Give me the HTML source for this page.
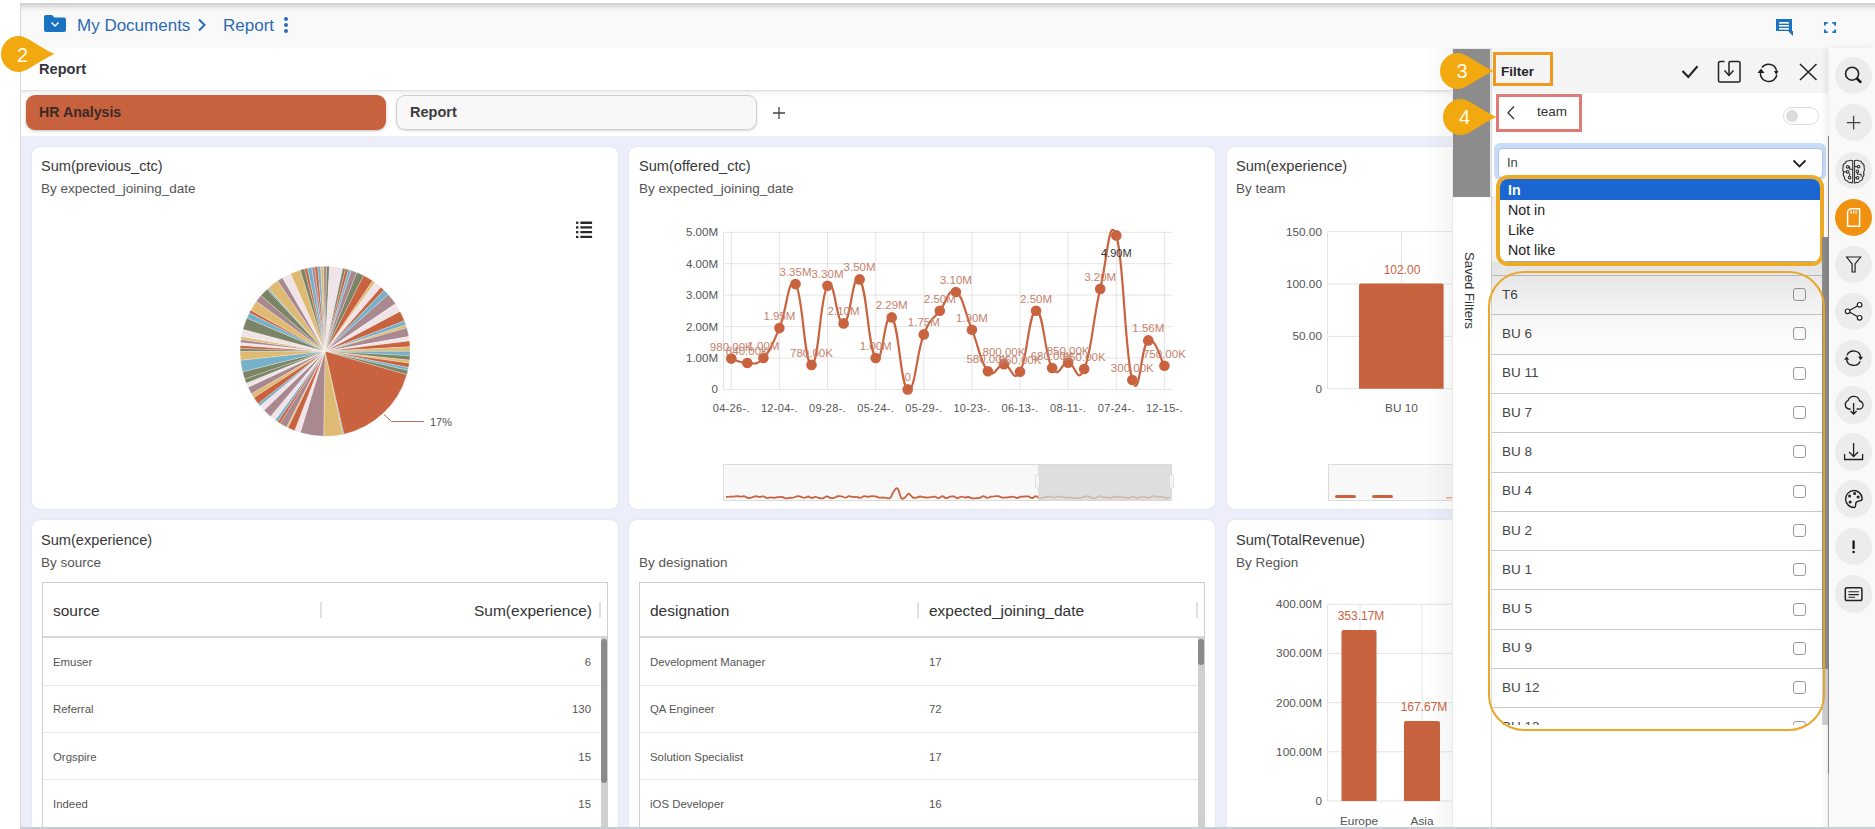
<!DOCTYPE html>
<html><head><meta charset="utf-8">
<style>
*{box-sizing:border-box;margin:0;padding:0}
html,body{width:1875px;height:829px;overflow:hidden;background:#fff;font-family:"Liberation Sans",sans-serif;color:#333}
.a{position:absolute}
#frame{left:20px;top:3px;width:1855px;height:826px;background:#eceef9;border-left:1px solid #d6d6d6;overflow:hidden}
#topshadow{display:none}
#hdr{left:21px;top:3px;width:1854px;height:45px;background:linear-gradient(#cfcfcf 0px,#d6d6d6 1.5px,#e2e2e2 3.5px,#f1f1f1 6px,#f9f9f9 8.5px)}
#rrow{left:21px;top:48px;width:1854px;height:43px;background:#fff}
#trow{left:21px;top:91px;width:1854px;height:45px;background:#fff}
.t{white-space:nowrap;line-height:1}
.card{background:#fff;border-radius:8px;box-shadow:0 0 1.5px rgba(120,130,170,.25)}
.ctitle{font-size:14.6px;color:#383838}
.csub{font-size:13.5px;color:#555}
.lbl{font-size:11.4px;color:#555}
.dl{font-size:11px;fill:#c47a62}
</style></head><body>
<div class="a" id="topshadow"></div>
<div class="a" id="frame"></div>
<div class="a" id="hdr"></div>
<div class="a" id="rrow"></div>
<div class="a" id="trow" style="top:91px;height:45px"></div>
<div class="a" style="left:21px;top:90px;width:1854px;height:8px;background:linear-gradient(rgba(0,0,0,.13),rgba(0,0,0,.05) 25%,rgba(0,0,0,.015) 60%,rgba(0,0,0,0))"></div>

<!-- breadcrumb -->
<svg class="a" style="left:44px;top:15px" width="22" height="17" viewBox="0 0 22 17">
<path d="M2 0 H8 L10.5 2.5 H20 Q22 2.5 22 4.5 V15 Q22 17 20 17 H2 Q0 17 0 15 V2 Q0 0 2 0Z" fill="#1a73c0"/>
<path d="M7.5 7.5 L11 11 L14.5 7.5" stroke="#fff" stroke-width="1.5" fill="none"/>
</svg>
<div class="a t" style="left:77px;top:17px;font-size:17px;color:#2d6bb0">My Documents</div>
<svg class="a" style="left:197px;top:18px" width="10" height="14"><path d="M2 1.5 L7.5 7 L2 12.5" stroke="#2a6cb4" stroke-width="2" fill="none"/></svg>
<div class="a t" style="left:223px;top:17px;font-size:17px;color:#2d6bb0">Report</div>
<svg class="a" style="left:283px;top:16px" width="6" height="18"><circle cx="3" cy="3" r="2" fill="#2a6cb4"/><circle cx="3" cy="9" r="2" fill="#2a6cb4"/><circle cx="3" cy="15" r="2" fill="#2a6cb4"/></svg>

<!-- header right icons -->
<svg class="a" style="left:1776px;top:19px" width="18" height="17" viewBox="0 0 18 17">
<path d="M0 0 H16 V12 H17 V17 L12 12 H0Z" fill="#1a73c0"/>
<rect x="3" y="3" width="10" height="1.6" fill="#fff"/><rect x="3" y="6" width="10" height="1.6" fill="#fff"/><rect x="3" y="9" width="10" height="1.6" fill="#fff"/>
</svg>
<svg class="a" style="left:1824px;top:22px" width="12" height="11" viewBox="0 0 13 13" preserveAspectRatio="none">
<path d="M1 4 V1 H4 M9 1 H12 V4 M12 9 V12 H9 M4 12 H1 V9" stroke="#1a73c0" stroke-width="2" fill="none"/>
</svg>

<!-- report row -->
<div class="a t" style="left:39px;top:62px;font-size:14.6px;font-weight:bold;color:#34343e">Report</div>

<!-- tabs -->
<div class="a" style="left:26px;top:95px;width:360px;height:35px;background:#c8623e;border-radius:9px;box-shadow:0 1px 3px rgba(0,0,0,.25)"></div>
<div class="a t" style="left:39px;top:105px;font-size:14.2px;font-weight:bold;color:#3a2a28">HR Analysis</div>
<div class="a" style="left:396px;top:95px;width:361px;height:35px;background:#f8f8f8;border:1px solid #cfcfcf;border-radius:9px;box-shadow:0 1px 2px rgba(0,0,0,.15)"></div>
<div class="a t" style="left:410px;top:105px;font-size:14.5px;font-weight:bold;color:#3b3b3b">Report</div>
<svg class="a" style="left:773px;top:107px" width="12" height="12"><path d="M6 0 V12 M0 6 H12" stroke="#444" stroke-width="1.3"/></svg>

<!-- CARDS -->
<div class="a card" style="left:32px;top:147px;width:586px;height:362px"></div>
<div class="a card" style="left:629px;top:147px;width:586px;height:362px"></div>
<div class="a card" style="left:1227px;top:147px;width:586px;height:362px"></div>
<div class="a card" style="left:32px;top:520px;width:586px;height:330px"></div>
<div class="a card" style="left:629px;top:520px;width:586px;height:330px"></div>
<div class="a card" style="left:1227px;top:520px;width:586px;height:330px"></div>

<!-- card titles -->
<div class="a t ctitle" style="left:41px;top:159px">Sum(previous_ctc)</div>
<div class="a t csub" style="left:41px;top:182px">By expected_joining_date</div>
<div class="a t ctitle" style="left:639px;top:159px">Sum(offered_ctc)</div>
<div class="a t csub" style="left:639px;top:182px">By expected_joining_date</div>
<div class="a t ctitle" style="left:1236px;top:159px">Sum(experience)</div>
<div class="a t csub" style="left:1236px;top:182px">By team</div>
<div class="a t ctitle" style="left:41px;top:533px">Sum(experience)</div>
<div class="a t csub" style="left:41px;top:556px">By source</div>
<div class="a t csub" style="left:639px;top:556px">By designation</div>
<div class="a t ctitle" style="left:1236px;top:533px">Sum(TotalRevenue)</div>
<div class="a t csub" style="left:1236px;top:556px">By Region</div>

<!-- legend icon -->
<svg class="a" style="left:575px;top:220px" width="19" height="20" viewBox="0 0 19 20">
<g fill="#2a2a2e"><rect x="1" y="1.6" width="2.4" height="2.3"/><rect x="1" y="6.3" width="2.4" height="2.3"/><rect x="1" y="11" width="2.4" height="2.3"/><rect x="1" y="15.8" width="2.4" height="2.3"/>
<rect x="5.3" y="1.6" width="11.8" height="2.3" rx="0.6"/><rect x="5.3" y="6.3" width="11.8" height="2.3" rx="0.6"/><rect x="5.3" y="11" width="11.8" height="2.3" rx="0.6"/><rect x="5.3" y="15.8" width="11.8" height="2.3" rx="0.6"/></g>
</svg>
<svg class="a" style="left:0;top:0" width="620" height="520">
<path d="M325.1 351.3 L343.93 434.19 A85 85 0 0 1 342.77 434.44Z" fill="#77b0c9" stroke="#fff" stroke-width="0.25"/>
<path d="M325.1 351.3 L342.77 434.44 A85 85 0 0 1 323.62 436.29Z" fill="#dfba73" stroke="#fff" stroke-width="0.25"/>
<path d="M325.1 351.3 L323.62 436.29 A85 85 0 0 1 300.25 432.59Z" fill="#a98890" stroke="#fff" stroke-width="0.25"/>
<path d="M325.1 351.3 L300.25 432.59 A85 85 0 0 1 294.64 430.65Z" fill="#f0e4e8" stroke="#fff" stroke-width="0.25"/>
<path d="M325.1 351.3 L294.64 430.65 A85 85 0 0 1 287.84 427.70Z" fill="#c9633f" stroke="#fff" stroke-width="0.25"/>
<path d="M325.1 351.3 L287.84 427.70 A85 85 0 0 1 286.51 427.04Z" fill="#dfba73" stroke="#fff" stroke-width="0.25"/>
<path d="M325.1 351.3 L286.51 427.04 A85 85 0 0 1 280.06 423.38Z" fill="#a98890" stroke="#fff" stroke-width="0.25"/>
<path d="M325.1 351.3 L280.06 423.38 A85 85 0 0 1 277.57 421.77Z" fill="#c9633f" stroke="#fff" stroke-width="0.25"/>
<path d="M325.1 351.3 L277.57 421.77 A85 85 0 0 1 275.14 420.07Z" fill="#77b0c9" stroke="#fff" stroke-width="0.25"/>
<path d="M325.1 351.3 L275.14 420.07 A85 85 0 0 1 270.46 416.41Z" fill="#f0e4e8" stroke="#fff" stroke-width="0.25"/>
<path d="M325.1 351.3 L270.46 416.41 A85 85 0 0 1 263.96 410.35Z" fill="#a98890" stroke="#fff" stroke-width="0.25"/>
<path d="M325.1 351.3 L263.96 410.35 A85 85 0 0 1 259.99 405.94Z" fill="#f0e4e8" stroke="#fff" stroke-width="0.25"/>
<path d="M325.1 351.3 L259.99 405.94 A85 85 0 0 1 258.12 403.63Z" fill="#77b0c9" stroke="#fff" stroke-width="0.25"/>
<path d="M325.1 351.3 L258.12 403.63 A85 85 0 0 1 253.81 397.59Z" fill="#c9633f" stroke="#fff" stroke-width="0.25"/>
<path d="M325.1 351.3 L253.81 397.59 A85 85 0 0 1 251.49 393.80Z" fill="#dfba73" stroke="#fff" stroke-width="0.25"/>
<path d="M325.1 351.3 L251.49 393.80 A85 85 0 0 1 248.06 387.22Z" fill="#a98890" stroke="#fff" stroke-width="0.25"/>
<path d="M325.1 351.3 L248.06 387.22 A85 85 0 0 1 246.29 383.14Z" fill="#f0e4e8" stroke="#fff" stroke-width="0.25"/>
<path d="M325.1 351.3 L246.29 383.14 A85 85 0 0 1 244.73 378.97Z" fill="#7b8565" stroke="#fff" stroke-width="0.25"/>
<path d="M325.1 351.3 L244.73 378.97 A85 85 0 0 1 242.62 371.86Z" fill="#7b8565" stroke="#fff" stroke-width="0.25"/>
<path d="M325.1 351.3 L242.62 371.86 A85 85 0 0 1 240.57 360.18Z" fill="#77b0c9" stroke="#fff" stroke-width="0.25"/>
<path d="M325.1 351.3 L240.57 360.18 A85 85 0 0 1 240.10 351.30Z" fill="#dfba73" stroke="#fff" stroke-width="0.25"/>
<path d="M325.1 351.3 L240.10 351.30 A85 85 0 0 1 240.15 348.33Z" fill="#7b8565" stroke="#fff" stroke-width="0.25"/>
<path d="M325.1 351.3 L240.15 348.33 A85 85 0 0 1 240.31 345.37Z" fill="#c9633f" stroke="#fff" stroke-width="0.25"/>
<path d="M325.1 351.3 L240.31 345.37 A85 85 0 0 1 240.57 342.42Z" fill="#f0e4e8" stroke="#fff" stroke-width="0.25"/>
<path d="M325.1 351.3 L240.57 342.42 A85 85 0 0 1 240.93 339.47Z" fill="#a98890" stroke="#fff" stroke-width="0.25"/>
<path d="M325.1 351.3 L240.93 339.47 A85 85 0 0 1 241.39 336.54Z" fill="#dfba73" stroke="#fff" stroke-width="0.25"/>
<path d="M325.1 351.3 L241.39 336.54 A85 85 0 0 1 243.00 329.30Z" fill="#f0e4e8" stroke="#fff" stroke-width="0.25"/>
<path d="M325.1 351.3 L243.00 329.30 A85 85 0 0 1 246.86 318.09Z" fill="#7b8565" stroke="#fff" stroke-width="0.25"/>
<path d="M325.1 351.3 L246.86 318.09 A85 85 0 0 1 249.36 312.71Z" fill="#77b0c9" stroke="#fff" stroke-width="0.25"/>
<path d="M325.1 351.3 L249.36 312.71 A85 85 0 0 1 250.76 310.09Z" fill="#c9633f" stroke="#fff" stroke-width="0.25"/>
<path d="M325.1 351.3 L250.76 310.09 A85 85 0 0 1 256.33 301.34Z" fill="#dfba73" stroke="#fff" stroke-width="0.25"/>
<path d="M325.1 351.3 L256.33 301.34 A85 85 0 0 1 260.95 295.53Z" fill="#a98890" stroke="#fff" stroke-width="0.25"/>
<path d="M325.1 351.3 L260.95 295.53 A85 85 0 0 1 267.13 289.13Z" fill="#7b8565" stroke="#fff" stroke-width="0.25"/>
<path d="M325.1 351.3 L267.13 289.13 A85 85 0 0 1 268.22 288.13Z" fill="#77b0c9" stroke="#fff" stroke-width="0.25"/>
<path d="M325.1 351.3 L268.22 288.13 A85 85 0 0 1 277.57 280.83Z" fill="#dfba73" stroke="#fff" stroke-width="0.25"/>
<path d="M325.1 351.3 L277.57 280.83 A85 85 0 0 1 282.60 277.69Z" fill="#a98890" stroke="#fff" stroke-width="0.25"/>
<path d="M325.1 351.3 L282.60 277.69 A85 85 0 0 1 290.53 273.65Z" fill="#f0e4e8" stroke="#fff" stroke-width="0.25"/>
<path d="M325.1 351.3 L290.53 273.65 A85 85 0 0 1 300.25 270.01Z" fill="#dfba73" stroke="#fff" stroke-width="0.25"/>
<path d="M325.1 351.3 L300.25 270.01 A85 85 0 0 1 304.54 268.82Z" fill="#7b8565" stroke="#fff" stroke-width="0.25"/>
<path d="M325.1 351.3 L304.54 268.82 A85 85 0 0 1 307.43 268.16Z" fill="#c9633f" stroke="#fff" stroke-width="0.25"/>
<path d="M325.1 351.3 L307.43 268.16 A85 85 0 0 1 311.80 267.35Z" fill="#77b0c9" stroke="#fff" stroke-width="0.25"/>
<path d="M325.1 351.3 L311.80 267.35 A85 85 0 0 1 314.74 266.93Z" fill="#a98890" stroke="#fff" stroke-width="0.25"/>
<path d="M325.1 351.3 L314.74 266.93 A85 85 0 0 1 317.69 266.62Z" fill="#c9633f" stroke="#fff" stroke-width="0.25"/>
<path d="M325.1 351.3 L317.69 266.62 A85 85 0 0 1 320.65 266.42Z" fill="#77b0c9" stroke="#fff" stroke-width="0.25"/>
<path d="M325.1 351.3 L320.65 266.42 A85 85 0 0 1 323.62 266.31Z" fill="#dfba73" stroke="#fff" stroke-width="0.25"/>
<path d="M325.1 351.3 L323.62 266.31 A85 85 0 0 1 326.58 266.31Z" fill="#a98890" stroke="#fff" stroke-width="0.25"/>
<path d="M325.1 351.3 L326.58 266.31 A85 85 0 0 1 329.55 266.42Z" fill="#7b8565" stroke="#fff" stroke-width="0.25"/>
<path d="M325.1 351.3 L329.55 266.42 A85 85 0 0 1 342.77 268.16Z" fill="#f0e4e8" stroke="#fff" stroke-width="0.25"/>
<path d="M325.1 351.3 L342.77 268.16 A85 85 0 0 1 345.66 268.82Z" fill="#7b8565" stroke="#fff" stroke-width="0.25"/>
<path d="M325.1 351.3 L345.66 268.82 A85 85 0 0 1 348.53 269.59Z" fill="#c9633f" stroke="#fff" stroke-width="0.25"/>
<path d="M325.1 351.3 L348.53 269.59 A85 85 0 0 1 351.37 270.46Z" fill="#77b0c9" stroke="#fff" stroke-width="0.25"/>
<path d="M325.1 351.3 L351.37 270.46 A85 85 0 0 1 356.94 272.49Z" fill="#a98890" stroke="#fff" stroke-width="0.25"/>
<path d="M325.1 351.3 L356.94 272.49 A85 85 0 0 1 363.69 275.56Z" fill="#7b8565" stroke="#fff" stroke-width="0.25"/>
<path d="M325.1 351.3 L363.69 275.56 A85 85 0 0 1 372.63 280.83Z" fill="#c9633f" stroke="#fff" stroke-width="0.25"/>
<path d="M325.1 351.3 L372.63 280.83 A85 85 0 0 1 375.06 282.53Z" fill="#dfba73" stroke="#fff" stroke-width="0.25"/>
<path d="M325.1 351.3 L375.06 282.53 A85 85 0 0 1 380.87 287.15Z" fill="#f0e4e8" stroke="#fff" stroke-width="0.25"/>
<path d="M325.1 351.3 L380.87 287.15 A85 85 0 0 1 384.15 290.16Z" fill="#c9633f" stroke="#fff" stroke-width="0.25"/>
<path d="M325.1 351.3 L384.15 290.16 A85 85 0 0 1 388.27 294.42Z" fill="#77b0c9" stroke="#fff" stroke-width="0.25"/>
<path d="M325.1 351.3 L388.27 294.42 A85 85 0 0 1 395.57 303.77Z" fill="#a98890" stroke="#fff" stroke-width="0.25"/>
<path d="M325.1 351.3 L395.57 303.77 A85 85 0 0 1 400.15 311.39Z" fill="#f0e4e8" stroke="#fff" stroke-width="0.25"/>
<path d="M325.1 351.3 L400.15 311.39 A85 85 0 0 1 404.45 320.84Z" fill="#c9633f" stroke="#fff" stroke-width="0.25"/>
<path d="M325.1 351.3 L404.45 320.84 A85 85 0 0 1 405.94 325.03Z" fill="#77b0c9" stroke="#fff" stroke-width="0.25"/>
<path d="M325.1 351.3 L405.94 325.03 A85 85 0 0 1 406.81 327.87Z" fill="#dfba73" stroke="#fff" stroke-width="0.25"/>
<path d="M325.1 351.3 L406.81 327.87 A85 85 0 0 1 408.81 336.54Z" fill="#a98890" stroke="#fff" stroke-width="0.25"/>
<path d="M325.1 351.3 L408.81 336.54 A85 85 0 0 1 409.47 340.94Z" fill="#f0e4e8" stroke="#fff" stroke-width="0.25"/>
<path d="M325.1 351.3 L409.47 340.94 A85 85 0 0 1 409.98 346.85Z" fill="#c9633f" stroke="#fff" stroke-width="0.25"/>
<path d="M325.1 351.3 L409.98 346.85 A85 85 0 0 1 410.10 351.30Z" fill="#dfba73" stroke="#fff" stroke-width="0.25"/>
<path d="M325.1 351.3 L410.10 351.30 A85 85 0 0 1 409.98 355.75Z" fill="#77b0c9" stroke="#fff" stroke-width="0.25"/>
<path d="M325.1 351.3 L409.98 355.75 A85 85 0 0 1 409.63 360.18Z" fill="#7b8565" stroke="#fff" stroke-width="0.25"/>
<path d="M325.1 351.3 L409.63 360.18 A85 85 0 0 1 409.27 363.13Z" fill="#dfba73" stroke="#fff" stroke-width="0.25"/>
<path d="M325.1 351.3 L409.27 363.13 A85 85 0 0 1 408.54 367.52Z" fill="#c9633f" stroke="#fff" stroke-width="0.25"/>
<path d="M325.1 351.3 L408.54 367.52 A85 85 0 0 1 407.92 370.42Z" fill="#77b0c9" stroke="#fff" stroke-width="0.25"/>
<path d="M325.1 351.3 L407.92 370.42 A85 85 0 0 1 406.81 374.73Z" fill="#7b8565" stroke="#fff" stroke-width="0.25"/>
<path d="M325.1 351.3 L406.81 374.73 A85 85 0 0 1 343.93 434.19Z" fill="#c9633f" stroke="#fff" stroke-width="0.25"/>
<path d="M384 414.5 L391.5 421.5 H424" stroke="#b0705c" stroke-width="1" fill="none"/>
<text x="430" y="426" font-size="11" fill="#555" font-family="Liberation Sans">17%</text>
</svg>
<svg class="a" style="left:0;top:0" width="1230" height="520" font-family="Liberation Sans">
<line x1="723" y1="389.4" x2="1172" y2="389.4" stroke="#e4e4e4" stroke-width="1"/>
<text x="718" y="393.4" font-size="11.5" fill="#555" text-anchor="end">0</text>
<line x1="723" y1="358.0" x2="1172" y2="358.0" stroke="#e4e4e4" stroke-width="1"/>
<text x="718" y="362.0" font-size="11.5" fill="#555" text-anchor="end">1.00M</text>
<line x1="723" y1="326.6" x2="1172" y2="326.6" stroke="#e4e4e4" stroke-width="1"/>
<text x="718" y="330.6" font-size="11.5" fill="#555" text-anchor="end">2.00M</text>
<line x1="723" y1="295.1" x2="1172" y2="295.1" stroke="#e4e4e4" stroke-width="1"/>
<text x="718" y="299.1" font-size="11.5" fill="#555" text-anchor="end">3.00M</text>
<line x1="723" y1="263.7" x2="1172" y2="263.7" stroke="#e4e4e4" stroke-width="1"/>
<text x="718" y="267.7" font-size="11.5" fill="#555" text-anchor="end">4.00M</text>
<line x1="723" y1="232.3" x2="1172" y2="232.3" stroke="#e4e4e4" stroke-width="1"/>
<text x="718" y="236.3" font-size="11.5" fill="#555" text-anchor="end">5.00M</text>
<line x1="731.3" y1="232" x2="731.3" y2="389.4" stroke="#e4e4e4" stroke-width="1"/>
<line x1="779.4" y1="232" x2="779.4" y2="389.4" stroke="#e4e4e4" stroke-width="1"/>
<line x1="827.5" y1="232" x2="827.5" y2="389.4" stroke="#e4e4e4" stroke-width="1"/>
<line x1="875.7" y1="232" x2="875.7" y2="389.4" stroke="#e4e4e4" stroke-width="1"/>
<line x1="923.8" y1="232" x2="923.8" y2="389.4" stroke="#e4e4e4" stroke-width="1"/>
<line x1="971.9" y1="232" x2="971.9" y2="389.4" stroke="#e4e4e4" stroke-width="1"/>
<line x1="1020.0" y1="232" x2="1020.0" y2="389.4" stroke="#e4e4e4" stroke-width="1"/>
<line x1="1068.1" y1="232" x2="1068.1" y2="389.4" stroke="#e4e4e4" stroke-width="1"/>
<line x1="1116.3" y1="232" x2="1116.3" y2="389.4" stroke="#e4e4e4" stroke-width="1"/>
<line x1="1164.4" y1="232" x2="1164.4" y2="389.4" stroke="#e4e4e4" stroke-width="1"/>
<text x="731.3" y="412" font-size="11" fill="#555" text-anchor="middle" letter-spacing="0.3">04-26-.</text>
<text x="779.4" y="412" font-size="11" fill="#555" text-anchor="middle" letter-spacing="0.3">12-04-.</text>
<text x="827.5" y="412" font-size="11" fill="#555" text-anchor="middle" letter-spacing="0.3">09-28-.</text>
<text x="875.7" y="412" font-size="11" fill="#555" text-anchor="middle" letter-spacing="0.3">05-24-.</text>
<text x="923.8" y="412" font-size="11" fill="#555" text-anchor="middle" letter-spacing="0.3">05-29-.</text>
<text x="971.9" y="412" font-size="11" fill="#555" text-anchor="middle" letter-spacing="0.3">10-23-.</text>
<text x="1020.0" y="412" font-size="11" fill="#555" text-anchor="middle" letter-spacing="0.3">06-13-.</text>
<text x="1068.1" y="412" font-size="11" fill="#555" text-anchor="middle" letter-spacing="0.3">08-11-.</text>
<text x="1116.3" y="412" font-size="11" fill="#555" text-anchor="middle" letter-spacing="0.3">07-24-.</text>
<text x="1164.4" y="412" font-size="11" fill="#555" text-anchor="middle" letter-spacing="0.3">12-15-.</text>
<line x1="723.5" y1="232" x2="723.5" y2="389.4" stroke="#e4e4e4"/>
<path d="M731.3 358.6 C735.0 359.6 739.9 363.2 747.3 363.0 C754.8 362.9 755.9 366.1 763.4 358.0 C770.9 349.8 771.9 345.4 779.4 328.1 C786.9 310.9 788.0 275.6 795.5 284.1 C802.9 292.7 804.0 364.5 811.5 364.9 C819.0 365.3 820.1 295.4 827.5 285.7 C835.0 276.0 836.1 324.9 843.6 323.4 C851.1 322.0 852.1 271.4 859.6 279.4 C867.1 287.5 868.2 349.1 875.7 358.0 C883.1 366.9 884.2 310.1 891.7 317.4 C899.2 324.8 900.3 385.4 907.7 389.4 C915.2 393.4 916.3 352.7 923.8 334.4 C931.3 316.1 932.3 320.7 939.8 310.8 C947.3 301.0 948.4 287.6 955.9 292.0 C963.3 296.4 964.4 311.2 971.9 329.7 C979.4 348.2 980.5 363.1 987.9 371.2 C995.4 379.2 996.5 364.1 1004.0 364.3 C1011.5 364.4 1012.5 384.3 1020.0 371.8 C1027.5 359.3 1028.6 311.7 1036.1 310.8 C1043.5 310.0 1044.6 355.9 1052.1 368.0 C1059.6 380.1 1060.7 362.5 1068.1 362.7 C1075.6 362.9 1076.7 386.2 1084.2 369.0 C1091.7 351.7 1092.7 320.0 1100.2 288.9 C1107.7 257.7 1108.8 214.2 1116.3 235.4 C1123.7 256.7 1124.8 355.5 1132.3 380.0 C1139.8 404.5 1140.9 343.7 1148.3 340.4 C1155.8 337.1 1160.6 359.9 1164.4 365.8" stroke="#c9633f" stroke-width="2.2" fill="none"/>
<circle cx="731.3" cy="358.6" r="5.3" fill="#c9633f"/>
<circle cx="747.3" cy="363.0" r="5.3" fill="#c9633f"/>
<circle cx="763.4" cy="358.0" r="5.3" fill="#c9633f"/>
<circle cx="779.4" cy="328.1" r="5.3" fill="#c9633f"/>
<circle cx="795.5" cy="284.1" r="5.3" fill="#c9633f"/>
<circle cx="811.5" cy="364.9" r="5.3" fill="#c9633f"/>
<circle cx="827.5" cy="285.7" r="5.3" fill="#c9633f"/>
<circle cx="843.6" cy="323.4" r="5.3" fill="#c9633f"/>
<circle cx="859.6" cy="279.4" r="5.3" fill="#c9633f"/>
<circle cx="875.7" cy="358.0" r="5.3" fill="#c9633f"/>
<circle cx="891.7" cy="317.4" r="5.3" fill="#c9633f"/>
<circle cx="907.7" cy="389.4" r="5.3" fill="#c9633f"/>
<circle cx="923.8" cy="334.4" r="5.3" fill="#c9633f"/>
<circle cx="939.8" cy="310.8" r="5.3" fill="#c9633f"/>
<circle cx="955.9" cy="292.0" r="5.3" fill="#c9633f"/>
<circle cx="971.9" cy="329.7" r="5.3" fill="#c9633f"/>
<circle cx="987.9" cy="371.2" r="5.3" fill="#c9633f"/>
<circle cx="1004.0" cy="364.3" r="5.3" fill="#c9633f"/>
<circle cx="1020.0" cy="371.8" r="5.3" fill="#c9633f"/>
<circle cx="1036.1" cy="310.8" r="5.3" fill="#c9633f"/>
<circle cx="1052.1" cy="368.0" r="5.3" fill="#c9633f"/>
<circle cx="1068.1" cy="362.7" r="5.3" fill="#c9633f"/>
<circle cx="1084.2" cy="369.0" r="5.3" fill="#c9633f"/>
<circle cx="1100.2" cy="288.9" r="5.3" fill="#c9633f"/>
<circle cx="1116.3" cy="235.4" r="5.3" fill="#c9633f"/>
<circle cx="1132.3" cy="380.0" r="5.3" fill="#c9633f"/>
<circle cx="1148.3" cy="340.4" r="5.3" fill="#c9633f"/>
<circle cx="1164.4" cy="365.8" r="5.3" fill="#c9633f"/>
<text x="731.3" y="350.6" font-size="11.5" fill="#c4826e" text-anchor="middle">980.00K</text>
<text x="747.3" y="355.0" font-size="11.5" fill="#c4826e" text-anchor="middle">840.00K</text>
<text x="763.4" y="350.0" font-size="11.5" fill="#c4826e" text-anchor="middle">1.00M</text>
<text x="779.4" y="320.1" font-size="11.5" fill="#c4826e" text-anchor="middle">1.95M</text>
<text x="795.5" y="276.1" font-size="11.5" fill="#c4826e" text-anchor="middle">3.35M</text>
<text x="811.5" y="356.9" font-size="11.5" fill="#c4826e" text-anchor="middle">780.00K</text>
<text x="827.5" y="277.7" font-size="11.5" fill="#c4826e" text-anchor="middle">3.30M</text>
<text x="843.6" y="315.4" font-size="11.5" fill="#c4826e" text-anchor="middle">2.10M</text>
<text x="859.6" y="271.4" font-size="11.5" fill="#c4826e" text-anchor="middle">3.50M</text>
<text x="875.7" y="350.0" font-size="11.5" fill="#c4826e" text-anchor="middle">1.00M</text>
<text x="891.7" y="309.4" font-size="11.5" fill="#c4826e" text-anchor="middle">2.29M</text>
<text x="907.7" y="381.4" font-size="11.5" fill="#c4826e" text-anchor="middle">0</text>
<text x="923.8" y="326.4" font-size="11.5" fill="#c4826e" text-anchor="middle">1.75M</text>
<text x="939.8" y="302.8" font-size="11.5" fill="#c4826e" text-anchor="middle">2.50M</text>
<text x="955.9" y="284.0" font-size="11.5" fill="#c4826e" text-anchor="middle">3.10M</text>
<text x="971.9" y="321.7" font-size="11.5" fill="#c4826e" text-anchor="middle">1.90M</text>
<text x="987.9" y="363.2" font-size="11.5" fill="#c4826e" text-anchor="middle">580.00K</text>
<text x="1004.0" y="356.3" font-size="11.5" fill="#c4826e" text-anchor="middle">800.00K</text>
<text x="1020.0" y="363.8" font-size="11.5" fill="#c4826e" text-anchor="middle">560.00K</text>
<text x="1036.1" y="302.8" font-size="11.5" fill="#c4826e" text-anchor="middle">2.50M</text>
<text x="1052.1" y="360.0" font-size="11.5" fill="#c4826e" text-anchor="middle">680.00K</text>
<text x="1068.1" y="354.7" font-size="11.5" fill="#c4826e" text-anchor="middle">850.00K</text>
<text x="1084.2" y="361.0" font-size="11.5" fill="#c4826e" text-anchor="middle">650.00K</text>
<text x="1100.2" y="280.9" font-size="11.5" fill="#c4826e" text-anchor="middle">3.20M</text>
<text x="1116.3" y="257.4" font-size="11" fill="#333" text-anchor="middle">4.90M</text>
<text x="1132.3" y="372.0" font-size="11.5" fill="#c4826e" text-anchor="middle">300.00K</text>
<text x="1148.3" y="332.4" font-size="11.5" fill="#c4826e" text-anchor="middle">1.56M</text>
<text x="1164.4" y="357.8" font-size="11.5" fill="#c4826e" text-anchor="middle">750.00K</text>
<rect x="723.5" y="464.5" width="448" height="36" fill="#f8f8f8" stroke="#dcdcdc"/>
<path d="M726.0 496.9 C726.6 496.9 728.5 496.7 729.7 496.7 C731.0 496.6 732.2 496.6 733.5 496.6 C734.7 496.5 735.9 496.2 737.2 496.2 C738.4 496.2 739.7 496.7 740.9 496.7 C742.2 496.7 743.4 496.0 744.7 496.3 C745.9 496.5 747.1 498.1 748.4 498.2 C749.6 498.4 750.9 497.6 752.1 497.3 C753.4 496.9 754.6 496.3 755.8 496.2 C757.1 496.2 758.3 496.9 759.6 496.9 C760.8 496.9 762.1 496.1 763.3 496.3 C764.6 496.5 765.8 497.9 767.0 498.1 C768.3 498.2 769.5 497.3 770.8 497.3 C772.0 497.2 773.3 497.8 774.5 497.8 C775.7 497.7 777.0 497.2 778.2 497.1 C779.5 497.0 780.7 496.8 782.0 497.0 C783.2 497.2 784.5 498.1 785.7 498.3 C786.9 498.4 788.2 497.9 789.4 497.8 C790.7 497.7 791.9 497.9 793.2 497.7 C794.4 497.4 795.6 496.5 796.9 496.3 C798.1 496.1 799.4 496.3 800.6 496.6 C801.9 496.9 803.1 498.0 804.4 497.9 C805.6 497.9 806.8 496.5 808.1 496.5 C809.3 496.6 810.6 497.9 811.8 498.0 C813.1 498.1 814.3 496.9 815.5 496.9 C816.8 496.9 818.0 497.8 819.3 498.0 C820.5 498.2 821.8 498.6 823.0 498.3 C824.3 498.0 825.5 496.5 826.7 496.4 C828.0 496.3 829.2 497.6 830.5 497.8 C831.7 498.1 833.0 498.1 834.2 497.8 C835.4 497.5 836.7 496.4 837.9 496.1 C839.2 495.9 840.4 496.1 841.7 496.4 C842.9 496.6 844.2 497.7 845.4 497.7 C846.6 497.6 847.9 496.3 849.1 496.2 C850.4 496.1 851.6 497.0 852.9 497.1 C854.1 497.2 855.3 496.7 856.6 496.8 C857.8 496.9 859.1 497.9 860.3 497.8 C861.6 497.8 862.8 496.4 864.1 496.2 C865.3 496.1 866.5 496.8 867.8 496.8 C869.0 496.8 870.3 496.2 871.5 496.2 C872.8 496.1 874.0 496.1 875.2 496.3 C876.5 496.6 877.7 497.4 879.0 497.6 C880.2 497.8 881.5 497.5 882.7 497.5 C883.9 497.6 885.2 497.9 886.4 497.9 C887.7 498.0 888.9 499.0 890.2 497.9 C891.4 496.8 892.7 492.7 893.9 491.1 C895.1 489.6 896.4 487.3 897.6 488.5 C898.9 489.7 900.1 496.8 901.4 498.3 C902.6 499.7 903.8 498.1 905.1 497.3 C906.3 496.5 907.6 493.6 908.8 493.6 C910.1 493.7 911.3 496.7 912.6 497.4 C913.8 498.1 915.0 497.8 916.3 497.6 C917.5 497.5 918.8 496.6 920.0 496.5 C921.3 496.4 922.5 497.1 923.7 497.2 C925.0 497.4 926.2 497.6 927.5 497.6 C928.7 497.6 930.0 497.4 931.2 497.2 C932.5 497.1 933.7 496.6 934.9 496.7 C936.2 496.9 937.4 498.3 938.7 498.2 C939.9 498.1 941.2 496.1 942.4 496.2 C943.6 496.2 944.9 498.2 946.1 498.2 C947.4 498.3 948.6 497.0 949.9 496.7 C951.1 496.3 952.4 496.2 953.6 496.4 C954.8 496.7 956.1 498.2 957.3 498.3 C958.6 498.3 959.8 496.7 961.1 496.6 C962.3 496.4 963.5 497.4 964.8 497.5 C966.0 497.6 967.3 496.9 968.5 497.0 C969.8 497.2 971.0 498.1 972.3 498.3 C973.5 498.5 974.7 498.3 976.0 498.2 C977.2 498.1 978.5 498.2 979.7 497.9 C981.0 497.6 982.2 496.2 983.4 496.2 C984.7 496.2 985.9 497.8 987.2 497.9 C988.4 497.9 989.7 496.9 990.9 496.6 C992.2 496.4 993.4 496.3 994.6 496.3 C995.9 496.2 997.1 496.0 998.4 496.2 C999.6 496.4 1000.9 497.3 1002.1 497.5 C1003.3 497.8 1004.6 497.6 1005.8 497.5 C1007.1 497.5 1008.3 497.3 1009.6 497.1 C1010.8 497.0 1012.1 496.4 1013.3 496.6 C1014.5 496.7 1015.8 498.1 1017.0 498.1 C1018.3 498.1 1019.5 496.9 1020.8 496.7 C1022.0 496.4 1023.2 496.6 1024.5 496.5 C1025.7 496.5 1027.0 496.1 1028.2 496.4 C1029.5 496.7 1030.7 498.3 1031.9 498.2 C1033.2 498.2 1034.4 496.2 1035.7 496.2 C1036.9 496.2 1038.2 497.9 1039.4 498.1 C1040.7 498.3 1041.9 497.7 1043.1 497.6 C1044.4 497.4 1045.6 497.2 1046.9 497.0 C1048.1 496.7 1049.4 496.2 1050.6 496.3 C1051.8 496.4 1053.1 497.6 1054.3 497.6 C1055.6 497.5 1056.8 496.3 1058.1 496.3 C1059.3 496.2 1060.6 496.9 1061.8 497.1 C1063.0 497.3 1064.3 497.5 1065.5 497.6 C1066.8 497.7 1068.0 497.6 1069.3 497.6 C1070.5 497.7 1071.7 497.8 1073.0 497.9 C1074.2 498.0 1075.5 498.1 1076.7 498.1 C1078.0 498.1 1079.2 498.2 1080.5 498.0 C1081.7 497.7 1082.9 497.1 1084.2 496.8 C1085.4 496.5 1086.7 495.9 1087.9 496.1 C1089.2 496.3 1090.4 497.6 1091.6 497.9 C1092.9 498.3 1094.1 498.5 1095.4 498.2 C1096.6 497.9 1097.9 496.3 1099.1 496.1 C1100.4 496.0 1101.6 496.9 1102.8 497.1 C1104.1 497.3 1105.3 497.3 1106.6 497.4 C1107.8 497.5 1109.1 497.8 1110.3 497.8 C1111.5 497.7 1112.8 497.2 1114.0 497.0 C1115.3 496.8 1116.5 496.4 1117.8 496.5 C1119.0 496.5 1120.3 497.1 1121.5 497.3 C1122.7 497.4 1124.0 497.2 1125.2 497.4 C1126.5 497.5 1127.7 498.4 1129.0 498.2 C1130.2 498.0 1131.4 496.3 1132.7 496.3 C1133.9 496.3 1135.2 498.1 1136.4 498.2 C1137.7 498.4 1138.9 497.5 1140.2 497.2 C1141.4 496.9 1142.6 496.3 1143.9 496.5 C1145.1 496.6 1146.4 498.0 1147.6 498.0 C1148.9 498.1 1150.1 497.0 1151.3 496.7 C1152.6 496.4 1153.8 496.2 1155.1 496.2 C1156.3 496.2 1157.6 496.9 1158.8 496.9 C1160.1 497.0 1161.3 496.4 1162.5 496.6 C1163.8 496.8 1165.0 497.9 1166.3 498.1 C1167.5 498.2 1169.4 497.5 1170.0 497.3" stroke="#c9633f" stroke-width="1.8" fill="none"/>
<rect x="1038" y="464.5" width="133.5" height="36.5" fill="#d6d6d6" opacity="0.75"/>
<rect x="1035.5" y="475" width="4" height="13" rx="1" fill="#f6f6f6" stroke="#cfcfcf" stroke-width="0.6"/>
<rect x="1169.5" y="475" width="4" height="13" rx="1" fill="#f6f6f6" stroke="#cfcfcf" stroke-width="0.6"/>
</svg>

<!-- bar chart card 3 -->
<svg class="a" style="left:1227px;top:147px" width="226" height="361" font-family="Liberation Sans">
<g transform="translate(-1227,-147)">
<line x1="1327.5" y1="231.6" x2="1460" y2="231.6" stroke="#e4e4e4"/>
<line x1="1327.5" y1="284" x2="1460" y2="284" stroke="#e4e4e4"/>
<line x1="1327.5" y1="336.4" x2="1460" y2="336.4" stroke="#e4e4e4"/>
<line x1="1327.5" y1="388.7" x2="1460" y2="388.7" stroke="#e4e4e4"/>
<line x1="1327.5" y1="231.6" x2="1327.5" y2="388.7" stroke="#e4e4e4"/>
<line x1="1401.5" y1="231.6" x2="1401.5" y2="388.7" stroke="#e4e4e4"/>
<text x="1322" y="235.6" font-size="11.8" fill="#555" text-anchor="end">150.00</text>
<text x="1322" y="288" font-size="11.8" fill="#555" text-anchor="end">100.00</text>
<text x="1322" y="340.4" font-size="11.8" fill="#555" text-anchor="end">50.00</text>
<text x="1322" y="392.7" font-size="11.8" fill="#555" text-anchor="end">0</text>
<path d="M1359 388.7 V285.5 Q1359 283.4 1361 283.4 H1441.6 Q1443.6 283.4 1443.6 285.5 V388.7Z" fill="#c9633f"/>
<text x="1402" y="274" font-size="12" fill="#c9633f" text-anchor="middle">102.00</text>
<text x="1401.5" y="412" font-size="11.8" fill="#555" text-anchor="middle">BU 10</text>
<rect x="1328.5" y="464.5" width="140" height="36" fill="#f8f8f8" stroke="#dcdcdc"/>
<rect x="1335" y="495" width="21" height="3" rx="1.5" fill="#c9633f"/>
<rect x="1372" y="495" width="21" height="3" rx="1.5" fill="#c9633f"/>
<rect x="1446" y="497" width="8" height="1.5" fill="#e8a890"/>
</g></svg>

<!-- table 1 -->
<div class="a" style="left:42px;top:582px;width:566px;height:260px;border:1px solid #cfcfcf;background:#fff"></div>
<div class="a" style="left:43px;top:636px;width:564px;height:2px;background:#d6d6d6"></div>
<div class="a t" style="left:53px;top:603px;font-size:15.5px;color:#333">source</div>
<div class="a" style="left:320px;top:602px;width:2px;height:16px;background:#e0e0e0"></div>
<div class="a t" style="left:474px;top:603px;font-size:15.5px;color:#333;width:118px;text-align:right">Sum(experience)</div>
<div class="a" style="left:599px;top:602px;width:2px;height:16px;background:#e0e0e0"></div>
<div class="a" style="left:43px;top:685px;width:558px;height:1px;background:#e2e6ee"></div>
<div class="a" style="left:43px;top:732px;width:558px;height:1px;background:#e2e6ee"></div>
<div class="a" style="left:43px;top:779px;width:558px;height:1px;background:#e2e6ee"></div>
<div class="a t" style="left:53px;top:657px;font-size:11.4px;color:#555">Emuser</div>
<div class="a t" style="left:53px;top:704px;font-size:11.4px;color:#555">Referral</div>
<div class="a t" style="left:53px;top:752px;font-size:11.4px;color:#555">Orgspire</div>
<div class="a t" style="left:53px;top:799px;font-size:11.4px;color:#555">Indeed</div>
<div class="a t" style="left:540px;top:657px;width:51px;text-align:right;font-size:11.4px;color:#555">6</div>
<div class="a t" style="left:540px;top:704px;width:51px;text-align:right;font-size:11.4px;color:#555">130</div>
<div class="a t" style="left:540px;top:752px;width:51px;text-align:right;font-size:11.4px;color:#555">15</div>
<div class="a t" style="left:540px;top:799px;width:51px;text-align:right;font-size:11.4px;color:#555">15</div>
<div class="a" style="left:601px;top:638px;width:6px;height:200px;background:#d0d0d0"></div>
<div class="a" style="left:601px;top:639px;width:6px;height:144px;background:#8a8a8a;border-radius:3px"></div>

<!-- table 2 -->
<div class="a" style="left:639px;top:582px;width:566px;height:260px;border:1px solid #cfcfcf;background:#fff"></div>
<div class="a" style="left:640px;top:636px;width:564px;height:2px;background:#d6d6d6"></div>
<div class="a t" style="left:650px;top:603px;font-size:15.5px;color:#333">designation</div>
<div class="a" style="left:917px;top:602px;width:2px;height:16px;background:#e0e0e0"></div>
<div class="a t" style="left:929px;top:603px;font-size:15.5px;color:#333">expected_joining_date</div>
<div class="a" style="left:1196px;top:602px;width:2px;height:16px;background:#e0e0e0"></div>
<div class="a" style="left:640px;top:685px;width:558px;height:1px;background:#e2e6ee"></div>
<div class="a" style="left:640px;top:732px;width:558px;height:1px;background:#e2e6ee"></div>
<div class="a" style="left:640px;top:779px;width:558px;height:1px;background:#e2e6ee"></div>
<div class="a t" style="left:650px;top:657px;font-size:11.4px;color:#555">Development Manager</div>
<div class="a t" style="left:650px;top:704px;font-size:11.4px;color:#555">QA Engineer</div>
<div class="a t" style="left:650px;top:752px;font-size:11.4px;color:#555">Solution Specialist</div>
<div class="a t" style="left:650px;top:799px;font-size:11.4px;color:#555">iOS Developer</div>
<div class="a t" style="left:929px;top:657px;font-size:11.4px;color:#555">17</div>
<div class="a t" style="left:929px;top:704px;font-size:11.4px;color:#555">72</div>
<div class="a t" style="left:929px;top:752px;font-size:11.4px;color:#555">17</div>
<div class="a t" style="left:929px;top:799px;font-size:11.4px;color:#555">16</div>
<div class="a" style="left:1198px;top:638px;width:6px;height:200px;background:#d0d0d0"></div>
<div class="a" style="left:1198px;top:639px;width:6px;height:26px;background:#8a8a8a;border-radius:3px"></div>

<!-- bar chart card 6 -->
<svg class="a" style="left:1227px;top:521px" width="226" height="310" font-family="Liberation Sans">
<g transform="translate(-1227,-521)">
<line x1="1327.5" y1="604.2" x2="1460" y2="604.2" stroke="#e4e4e4"/>
<line x1="1327.5" y1="653.4" x2="1460" y2="653.4" stroke="#e4e4e4"/>
<line x1="1327.5" y1="702.6" x2="1460" y2="702.6" stroke="#e4e4e4"/>
<line x1="1327.5" y1="751.8" x2="1460" y2="751.8" stroke="#e4e4e4"/>
<line x1="1327.5" y1="801" x2="1460" y2="801" stroke="#e4e4e4"/>
<line x1="1327.5" y1="604.2" x2="1327.5" y2="801" stroke="#e4e4e4"/>
<line x1="1360" y1="604.2" x2="1360" y2="801" stroke="#e4e4e4"/>
<line x1="1422" y1="604.2" x2="1422" y2="801" stroke="#e4e4e4"/>
<text x="1322" y="608.2" font-size="11.8" fill="#555" text-anchor="end">400.00M</text>
<text x="1322" y="657.4" font-size="11.8" fill="#555" text-anchor="end">300.00M</text>
<text x="1322" y="706.6" font-size="11.8" fill="#555" text-anchor="end">200.00M</text>
<text x="1322" y="755.8" font-size="11.8" fill="#555" text-anchor="end">100.00M</text>
<text x="1322" y="805" font-size="11.8" fill="#555" text-anchor="end">0</text>
<path d="M1341.5 801 V632 Q1341.5 630 1343.5 630 H1374.5 Q1376.5 630 1376.5 632 V801Z" fill="#c9633f"/>
<path d="M1404 801 V723 Q1404 721 1406 721 H1438 Q1440 721 1440 723 V801Z" fill="#c9633f"/>
<text x="1361" y="620" font-size="12" fill="#c9633f" text-anchor="middle">353.17M</text>
<text x="1424" y="711" font-size="12" fill="#c9633f" text-anchor="middle">167.67M</text>
<text x="1359" y="825" font-size="11.8" fill="#555" text-anchor="middle">Europe</text>
<text x="1422" y="825" font-size="11.8" fill="#555" text-anchor="middle">Asia</text>
</g></svg>

<!-- saved filters strip -->
<div class="a" style="left:1425px;top:48px;width:28px;height:781px;background:linear-gradient(90deg,rgba(255,255,255,0),rgba(0,0,0,.04))"></div>
<div class="a" style="left:1452px;top:48px;width:39px;height:781px;background:#fff;border-left:1px solid #e6e6e6"></div>
<div class="a" style="left:1452px;top:48px;width:39px;height:149px;background:#8c8c8c;border:1px solid #e9e9e9;border-bottom:none"></div>
<div class="a t" style="left:1469px;top:252px;font-size:13.2px;color:#333;transform-origin:0 0;transform:translate(7px,0) rotate(90deg)">Saved Filters</div>

<!-- filter panel -->
<div class="a" style="left:1491px;top:48px;width:338px;height:781px;background:#fff;border-left:1px solid #dcdcdc"></div>
<div class="a" style="left:1491px;top:48px;width:337px;height:45px;background:#f4f4f4"></div>
<div class="a t" style="left:1501px;top:65px;font-size:13.5px;font-weight:bold;color:#262626">Filter</div>
<div class="a" style="left:1493px;top:52px;width:60px;height:34px;border:3px solid #ef9820"></div>
<!-- header icons -->
<svg class="a" style="left:1680px;top:60px" width="150" height="26" viewBox="1680 60 150 26">
<path d="M1682.5 71 L1688.3 77 L1697.5 66.3" stroke="#222" stroke-width="2.1" fill="none"/>
<path d="M1724.5 61.5 H1720 Q1718.5 61.5 1718.5 63 V80.5 Q1718.5 82 1720 82 H1738.5 Q1740 82 1740 80.5 V63 Q1740 61.5 1738.5 61.5 H1730.5 Q1729 61.5 1729 63 V75.5" stroke="#222" stroke-width="1.5" fill="none"/>
<path d="M1724.5 70.5 L1729 75.5 L1733.5 70.5" stroke="#222" stroke-width="1.5" fill="none"/>
<path d="M1760.5 72.5 A8 7.5 0 0 0 1776.8 75" stroke="#222" stroke-width="1.5" fill="none"/>
<path d="M1776.5 71 A8 7.5 0 0 0 1762 67.5" stroke="#222" stroke-width="1.5" fill="none"/>
<path d="M1757.5 73 L1761 68.5 L1764.5 73Z" fill="#222"/>
<path d="M1774 71 L1778.5 71 L1776.3 75Z" fill="#222"/>
<path d="M1800 64 L1816.5 80 M1816.5 64 L1800 80" stroke="#222" stroke-width="1.5"/>
</svg>
<!-- team row -->
<div class="a" style="left:1496px;top:94px;width:86px;height:38px;border:3px solid #e07a78"></div>
<svg class="a" style="left:1506px;top:105px" width="10" height="16"><path d="M8 1.5 L2 7.8 L8 14" stroke="#333" stroke-width="1.3" fill="none"/></svg>
<div class="a t" style="left:1537px;top:105px;font-size:13.5px;color:#333">team</div>
<div class="a" style="left:1783px;top:107px;width:36px;height:18px;border:1px solid #dedede;border-radius:9px;background:#fff"></div>
<div class="a" style="left:1786px;top:110px;width:12px;height:12px;border-radius:50%;background:#dcdcdc"></div>

<!-- select -->
<div class="a" style="left:1494px;top:143px;width:332px;height:37px;border-radius:6px;background:#c9dcf7"></div>
<div class="a" style="left:1498px;top:147.5px;width:325px;height:30px;border-radius:4px;background:#fff;border:1px solid #a8c4ef"></div>
<div class="a t" style="left:1507px;top:156px;font-size:13px;color:#444">In</div>
<svg class="a" style="left:1792px;top:159px" width="15" height="10"><path d="M1.5 1.5 L7.5 7.5 L13.5 1.5" stroke="#222" stroke-width="1.8" fill="none"/></svg>

<!-- list rows -->
<div class="a" style="left:1491px;top:275px;width:332px;height:1px;background:#c8c8c8"></div>
<div id="rows"></div>
<div class="a t" style="left:1502px;top:287.6px;font-size:13.5px;color:#464646">T6</div>
<div class="a" style="left:1793px;top:288.1px;width:13px;height:13px;border:1px solid #9a9a9a;border-radius:3px"></div>
<div class="a" style="left:1491px;top:314.3px;width:332px;height:1px;background:#c8c8c8"></div>
<div class="a t" style="left:1502px;top:326.9px;font-size:13.5px;color:#464646">BU 6</div>
<div class="a" style="left:1793px;top:327.4px;width:13px;height:13px;border:1px solid #9a9a9a;border-radius:3px"></div>
<div class="a" style="left:1491px;top:353.6px;width:332px;height:1px;background:#c8c8c8"></div>
<div class="a t" style="left:1502px;top:366.2px;font-size:13.5px;color:#464646">BU 11</div>
<div class="a" style="left:1793px;top:366.8px;width:13px;height:13px;border:1px solid #9a9a9a;border-radius:3px"></div>
<div class="a" style="left:1491px;top:392.9px;width:332px;height:1px;background:#c8c8c8"></div>
<div class="a t" style="left:1502px;top:405.5px;font-size:13.5px;color:#464646">BU 7</div>
<div class="a" style="left:1793px;top:406.0px;width:13px;height:13px;border:1px solid #9a9a9a;border-radius:3px"></div>
<div class="a" style="left:1491px;top:432.2px;width:332px;height:1px;background:#c8c8c8"></div>
<div class="a t" style="left:1502px;top:444.9px;font-size:13.5px;color:#464646">BU 8</div>
<div class="a" style="left:1793px;top:445.4px;width:13px;height:13px;border:1px solid #9a9a9a;border-radius:3px"></div>
<div class="a" style="left:1491px;top:471.5px;width:332px;height:1px;background:#c8c8c8"></div>
<div class="a t" style="left:1502px;top:484.1px;font-size:13.5px;color:#464646">BU 4</div>
<div class="a" style="left:1793px;top:484.6px;width:13px;height:13px;border:1px solid #9a9a9a;border-radius:3px"></div>
<div class="a" style="left:1491px;top:510.8px;width:332px;height:1px;background:#c8c8c8"></div>
<div class="a t" style="left:1502px;top:523.5px;font-size:13.5px;color:#464646">BU 2</div>
<div class="a" style="left:1793px;top:524.0px;width:13px;height:13px;border:1px solid #9a9a9a;border-radius:3px"></div>
<div class="a" style="left:1491px;top:550.1px;width:332px;height:1px;background:#c8c8c8"></div>
<div class="a t" style="left:1502px;top:562.8px;font-size:13.5px;color:#464646">BU 1</div>
<div class="a" style="left:1793px;top:563.2px;width:13px;height:13px;border:1px solid #9a9a9a;border-radius:3px"></div>
<div class="a" style="left:1491px;top:589.4px;width:332px;height:1px;background:#c8c8c8"></div>
<div class="a t" style="left:1502px;top:602.0px;font-size:13.5px;color:#464646">BU 5</div>
<div class="a" style="left:1793px;top:602.5px;width:13px;height:13px;border:1px solid #9a9a9a;border-radius:3px"></div>
<div class="a" style="left:1491px;top:628.7px;width:332px;height:1px;background:#c8c8c8"></div>
<div class="a t" style="left:1502px;top:641.3px;font-size:13.5px;color:#464646">BU 9</div>
<div class="a" style="left:1793px;top:641.8px;width:13px;height:13px;border:1px solid #9a9a9a;border-radius:3px"></div>
<div class="a" style="left:1491px;top:668.0px;width:332px;height:1px;background:#c8c8c8"></div>
<div class="a t" style="left:1502px;top:680.6px;font-size:13.5px;color:#464646">BU 12</div>
<div class="a" style="left:1793px;top:681.1px;width:13px;height:13px;border:1px solid #9a9a9a;border-radius:3px"></div>
<div class="a" style="left:1491px;top:707.3px;width:332px;height:1px;background:#c8c8c8"></div>
<div class="a t" style="left:1502px;top:720.0px;font-size:13.5px;color:#464646">BU 13</div>
<div class="a" style="left:1793px;top:720.5px;width:13px;height:13px;border:1px solid #9a9a9a;border-radius:3px"></div>
<div class="a" style="left:1491px;top:725px;width:331px;height:104px;background:#fff"></div>
<div class="a" style="left:1491px;top:48px;width:1px;height:781px;background:#dcdcdc"></div>
<div class="a" style="left:1491px;top:196px;width:332px;height:66px;background:rgba(0,0,0,.06)"></div>
<div class="a" style="left:1491px;top:262px;width:332px;height:105px;background:linear-gradient(rgba(0,0,0,.11),rgba(0,0,0,.085) 20%,rgba(0,0,0,.04) 50%,rgba(0,0,0,.012) 78%,rgba(0,0,0,0))"></div>

<!-- dropdown options -->
<div class="a" style="left:1496px;top:175px;width:328px;height:91px;border:4px solid #eeaa22;border-radius:12px;background:#fff;overflow:hidden">
 <div style="position:absolute;left:0;top:0;width:320px;height:21px;background:#1b66d1"></div>
 <div class="t" style="position:absolute;left:8px;top:4px;font-size:14.2px;color:#fff;font-weight:bold">In</div>
 <div class="t" style="position:absolute;left:8px;top:23.5px;font-size:14.2px;color:#222">Not in</div>
 <div class="t" style="position:absolute;left:8px;top:43.5px;font-size:14.2px;color:#222">Like</div>
 <div class="t" style="position:absolute;left:8px;top:63.5px;font-size:14.2px;color:#222">Not like</div>
 <div style="position:absolute;left:0;top:82px;width:320px;height:1px;background:#a8a8a8"></div>
</div>
<!-- scrollbar -->
<div class="a" style="left:1822px;top:237px;width:6px;height:488px;background:#d2d2d2"></div>
<div class="a" style="left:1822px;top:237px;width:6px;height:432px;background:#8c8c8c"></div>
<div class="a" style="left:1828px;top:136px;width:2px;height:693px;background:#c8c8c8"></div>
<div class="a" style="left:1828px;top:136px;width:2px;height:638px;background:#8c8c8c"></div>

<!-- list highlight outline -->
<div class="a" style="left:1488px;top:271px;width:337px;height:460px;border:2px solid #e8a82a;border-radius:36px"></div>
<!-- badges -->
<svg class="a" style="left:0;top:0" width="1875" height="829" pointer-events="none">
<defs><path id="bdg" d="M0 -18 C8 -18 18 -8 35.5 0 C18 8 8 18 0 18 A18 18 0 0 1 0 -18Z"/></defs>
<g font-family="Liberation Sans" font-size="20" fill="#fffbea" text-anchor="middle">
<use href="#bdg" x="19" y="54" fill="#f2a90f"/><text x="22.5" y="61.5">2</text>
<use href="#bdg" x="1458" y="71" fill="#f2a90f"/><text x="1462" y="78">3</text>
<use href="#bdg" x="1461" y="117" fill="#f2a90f"/><text x="1464.5" y="124">4</text>
</g></svg>

<!-- right icon column -->
<div class="a" style="left:1829px;top:48px;width:46px;height:781px;background:#f9f9f9;box-shadow:-3px 0 6px rgba(0,0,0,.08)"></div>
<div class="a" style="left:1834.9px;top:57.0px;width:37.4px;height:37.4px;border-radius:50%;background:#ececec"></div>
<div class="a" style="left:1834.9px;top:103.9px;width:37.4px;height:37.4px;border-radius:50%;background:#ececec"></div>
<div class="a" style="left:1834.9px;top:152.1px;width:37.4px;height:37.4px;border-radius:50%;background:#ececec"></div>
<div class="a" style="left:1834.9px;top:199.1px;width:37.4px;height:37.4px;border-radius:50%;background:#f0920f"></div>
<div class="a" style="left:1834.9px;top:245.8px;width:37.4px;height:37.4px;border-radius:50%;background:#ececec"></div>
<div class="a" style="left:1834.9px;top:292.6px;width:37.4px;height:37.4px;border-radius:50%;background:#ececec"></div>
<div class="a" style="left:1834.9px;top:339.5px;width:37.4px;height:37.4px;border-radius:50%;background:#ececec"></div>
<div class="a" style="left:1834.9px;top:386.3px;width:37.4px;height:37.4px;border-radius:50%;background:#ececec"></div>
<div class="a" style="left:1834.9px;top:433.3px;width:37.4px;height:37.4px;border-radius:50%;background:#ececec"></div>
<div class="a" style="left:1834.9px;top:480.3px;width:37.4px;height:37.4px;border-radius:50%;background:#ececec"></div>
<div class="a" style="left:1834.9px;top:527.8px;width:37.4px;height:37.4px;border-radius:50%;background:#ececec"></div>
<div class="a" style="left:1834.9px;top:575.3px;width:37.4px;height:37.4px;border-radius:50%;background:#ececec"></div>
<svg class="a" style="left:0;top:0" width="1875" height="829">
<circle cx="1852.1" cy="73.7" r="6.5" stroke="#222" stroke-width="1.6" fill="none"/><path d="M1856.6 78.2 L1861.1 82.7" stroke="#111" stroke-width="2.6"/>
<path d="M1853.6 115.8 V129.4 M1846.8 122.6 H1860.3999999999999" stroke="#444" stroke-width="1.3"/>
<g transform="translate(1853.6,171.8)" stroke="#333" stroke-width="1.1" fill="none"><path d="M-0.9 -11 Q-3 -12 -5 -11 Q-8 -11 -8.5 -8.5 Q-11 -7.5 -10.5 -4.5 Q-11.5 -1.5 -10 0.5 Q-11 3.5 -9 5.5 Q-9.5 8.5 -6.5 9 Q-5 11.5 -2.5 10.5 Q-1.5 11.5 -0.9 11 Z M0.9 -11 Q3 -12 5 -11 Q8 -11 8.5 -8.5 Q11 -7.5 10.5 -4.5 Q11.5 -1.5 10 0.5 Q11 3.5 9 5.5 Q9.5 8.5 6.5 9 Q5 11.5 2.5 10.5 Q1.5 11.5 0.9 11 Z"/><circle cx="-6" cy="-5" r="1.3"/><path d="M-4.7 -5 H-4 V-2.5 H-0.9"/><circle cx="-6" cy="0" r="1.3"/><path d="M-7.3 0 H-10.5"/><circle cx="-4" cy="5.8" r="1.3"/><path d="M-4 4.5 V1.5"/><circle cx="5" cy="-5.2" r="1.3"/><path d="M3.7 -5.2 H0.9"/><circle cx="3.8" cy="-0.5" r="1.3"/><path d="M3.8 0.8 V2.5 H7.5 V5"/><circle cx="4" cy="6" r="1.3"/><path d="M2.7 6 H0.9"/></g>
<path d="M1850.1 208.8 H1859.6 V226.3 H1847.6 V211.3Z" stroke="#fff" stroke-width="1.5" fill="none"/><path d="M1851.1 210.8 V213.8 M1853.6 210.8 V213.8 M1856.1 210.8 V213.8" stroke="#fff" stroke-width="1.2"/>
<path d="M1846.6 257.0 H1860.6 L1855.1 264.0 V272.0 H1852.1 V264.0Z" stroke="#222" stroke-width="1.2" fill="none"/>
<path d="M1848.1 311.3 L1858.6 305.3 M1848.1 311.3 L1858.6 317.3" stroke="#222" stroke-width="1.2"/><circle cx="1847.6" cy="311.3" r="2.3" fill="#fff" stroke="#222" stroke-width="1.2"/><circle cx="1859.6" cy="304.8" r="2.3" fill="#fff" stroke="#222" stroke-width="1.2"/><circle cx="1859.6" cy="317.8" r="2.3" fill="#fff" stroke="#222" stroke-width="1.2"/>
<path d="M1846.6 359.2 A7 6.5 0 0 0 1860.1 361.2" stroke="#222" stroke-width="1.4" fill="none"/><path d="M1860.6 357.2 A7 6.5 0 0 0 1847.1 355.2" stroke="#222" stroke-width="1.4" fill="none"/><path d="M1844.1 359.7 L1846.6 356.2 L1849.1 359.7Z" fill="#222"/><path d="M1858.1 356.7 L1863.1 356.7 L1860.6 360.2Z" fill="#222"/>
<path d="M1850.6 409 H1848.6 A4.5 4.5 0 0 1 1848.1 400.5 A6 6 0 0 1 1859.6 401 A4 4 0 0 1 1858.6 409 H1856.6" stroke="#222" stroke-width="1.3" fill="none"/><path d="M1853.6 403 V414 M1850.6 411 L1853.6 414 L1856.6 411" stroke="#222" stroke-width="1.3" fill="none"/>
<path d="M1853.6 443 V456 M1849.1 452 L1853.6 456.5 L1858.1 452" stroke="#222" stroke-width="1.3" fill="none"/><path d="M1844.6 454 V459.5 H1862.6 V454" stroke="#222" stroke-width="1.3" fill="none"/>
<path d="M1853.6 490.5 A8.5 8.5 0 1 0 1854.6 507.5 C1856.6 507 1854.6 503 1856.6 502 C1858.6 500 1862.6 502 1862.1 498 A8.5 8.5 0 0 0 1853.6 490.5Z" stroke="#222" stroke-width="1.4" fill="none"/><circle cx="1849.6" cy="496" r="1.5" fill="#222"/><circle cx="1854.6" cy="493.5" r="1.5" fill="#222"/><circle cx="1858.1" cy="497" r="1.5" fill="#222"/><circle cx="1850.1" cy="502" r="1.5" fill="#222"/>
<path d="M1853.6 540.5 V549.0" stroke="#111" stroke-width="2.2"/><circle cx="1853.6" cy="552.0" r="1.2" fill="#111"/>
<rect x="1845.3" y="587.7" width="16.6" height="12.8" rx="1.8" stroke="#222" stroke-width="1.5" fill="none"/><path d="M1848.3999999999999 591.8 H1858.8 M1848.3999999999999 594.6 H1858.8 M1848.3999999999999 597.3 H1855.1" stroke="#222" stroke-width="1.1"/>
</svg>

<!-- bottom border -->
<div class="a" style="left:20px;top:827px;width:1855px;height:2px;background:#c9ced6"></div>
</body></html>
